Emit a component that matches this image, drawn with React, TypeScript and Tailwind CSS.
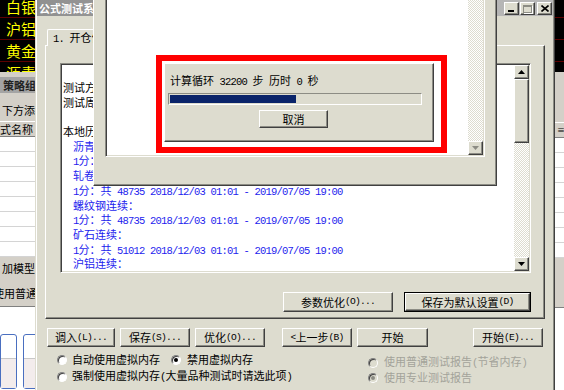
import React from 'react';

const CJK = /([\u2E80-\u9FFF\u3000-\u303F\uFF00-\uFFEF]+)/;

// CJK runs use the page font, everything else a half-width mono run
function Txt({ s, mono = 'text-[9px]' }: { s: string; mono?: string }) {
  const parts = s.split(CJK).filter((p) => p !== '');
  return (
    <>
      {parts.map((p, i) =>
        CJK.test(p) ? (
          <span key={i}>{p}</span>
        ) : (
          <span key={i} className={`font-['Liberation_Mono',monospace] whitespace-pre ${mono}`}>
            {p}
          </span>
        )
      )}
    </>
  );
}

const raised =
  'border border-t-white border-l-white border-r-[#404040] border-b-[#404040] shadow-[inset_-1px_-1px_0_#8c8c84]';
const sunken =
  'border border-t-[#8c8c84] border-l-[#8c8c84] border-r-white border-b-white shadow-[inset_1px_1px_0_#404040,inset_-1px_-1px_0_#dddccf]';
const dither = 'bg-[repeating-conic-gradient(#ffffff_0%_25%,#dddccf_0%_50%)] bg-[length:2px_2px]';

const MONO_LIST = 'text-[10.5px] tracking-[-0.8px]';
const MONO_BTN = 'text-[9.6px] tracking-[-0.75px]';

interface BtnProps {
  label: string;
  className?: string;
  def?: boolean;
}

const Btn: React.FC<BtnProps> = ({ label, className = '', def = false }) => {
  const face = (
    <div className={`flex h-full w-full items-center justify-center bg-[#dddccf] text-[11px] leading-none ${raised}`}>
      <Txt s={label} mono={MONO_BTN} />
    </div>
  );
  if (def) return <div className={`border border-black ${className}`}>{face}</div>;
  return <div className={className}>{face}</div>;
};

const Radio: React.FC<{ on?: boolean; dis?: boolean }> = ({ on = false, dis = false }) => (
  <span
    className={`inline-flex h-[10px] w-[10px] shrink-0 items-center justify-center rounded-full border border-t-[#808080] border-l-[#808080] border-r-white border-b-white shadow-[inset_1px_1px_0_#404040] ${
      dis ? 'bg-[#dddccf]' : 'bg-white'
    }`}
  >
    {on && <span className={`h-[4px] w-[4px] rounded-full ${dis ? 'bg-[#8c8c84]' : 'bg-black'}`} />}
  </span>
);

const Arrow: React.FC<{ up?: boolean; color?: string }> = ({ up = false, color = '#000' }) => (
  <svg width="7" height="4" viewBox="0 0 7 4">
    <polygon points={up ? '3.5,0 7,4 0,4' : '0,0 7,0 3.5,4'} fill={color} />
  </svg>
);

const RANGE = ' 2018/12/03 01:01 - 2019/07/05 19:00';

const LINES: [string, boolean][] = [
  ['测试方式：逐K线计算', false],
  ['测试周期：1分钟', false],
  ['', false],
  ['本地历史数据：', false],
  ['沥青连续：', true],
  ['1分：共 48735' + RANGE, true],
  ['轧卷连续：', true],
  ['1分：共 48735' + RANGE, true],
  ['螺纹钢连续：', true],
  ['1分：共 48735' + RANGE, true],
  ['矿石连续：', true],
  ['1分：共 51012' + RANGE, true],
  ['沪铝连续：', true],
  ['1分：共 51012' + RANGE, true],
];

const QUOTES = ['白银', '沪铝', '黄金', '沥青'];

function LeftPanel() {
  return (
    <div className="absolute left-0 top-0 flex h-[390px] w-[35px] flex-col overflow-hidden text-[11px]">
      <div className="h-[72px] overflow-hidden bg-black">
        <div className="-mt-[4px]">
          {QUOTES.map((q) => (
            <div key={q} className="h-[22px] whitespace-nowrap border-b border-b-[#5c0000] pl-[6px] text-[15px] leading-[21px] text-[#ffff00]">
              {q}
            </div>
          ))}
        </div>
      </div>
      <div className="h-[5px] bg-[#d4d0c8]" />
      <div className="h-[16px] whitespace-nowrap bg-[#a4a4a4] pl-[3px] font-bold leading-[16px] text-[#222]">策略组</div>
      <div className="h-[28px] whitespace-nowrap bg-[#d4d0c8] pl-[2px] pt-[9px] leading-[16px]">下方添加</div>
      <div className="h-[16px] whitespace-nowrap border-t border-b border-t-white border-b-[#808080] bg-[#d4d0c8] leading-[14px]">式名称</div>
      <div className="flex flex-col bg-white">
        {Array.from({ length: 8 }).map((_, i) => (
          <div key={i} className="h-[15px] border-b border-b-[#d4d4d4]" />
        ))}
      </div>
      <div className="h-[23px] whitespace-nowrap bg-[#d4d0c8] pl-[2px] pt-[3px] leading-[16px]">加模型</div>
      <div className="h-[27px] whitespace-nowrap border-b border-b-[#808080] bg-[#d4d0c8] -ml-[7px] pt-[5px] leading-[16px]">使用普通</div>
      <div className="flex flex-1 gap-[6px] bg-white pt-[27px]">
        <div className="flex h-[55px] w-[17px] shrink-0 flex-col rounded-[3px] border border-[#4a6fc0]">
          <div className="h-[24px] border-b border-b-[#c8c8c8]" />
          <div className="flex-1 bg-[#f3ecec]" />
        </div>
        <div className="flex h-[55px] w-[20px] shrink-0 flex-col rounded-[3px] border border-[#4a6fc0]">
          <div className="h-[24px] border-b border-b-[#c8c8c8]" />
          <div className="flex-1 bg-[#f3ecec]" />
        </div>
      </div>
    </div>
  );
}

function RightStrip() {
  return (
    <div className="absolute left-[555px] top-0 flex h-[390px] w-[9px] flex-col overflow-hidden text-[8px]">
      <div className="h-[72px] overflow-hidden bg-black">
        <div className="-mt-[4px]">
          {QUOTES.map((q) => (
            <div key={q} className="h-[22px] border-b border-b-[#5c0000]" />
          ))}
        </div>
      </div>
      <div className="h-[50px] bg-[#d4d0c8]" />
      <div className="h-[16px] border-t border-b border-t-white border-b-[#808080] bg-[#d4d0c8] pl-[2px] leading-[14px]">≡</div>
      <div className="flex flex-col bg-white">
        {Array.from({ length: 8 }).map((_, i) => (
          <div key={i} className="h-[15px] border-b border-b-[#d4d4d4]" />
        ))}
      </div>
      <div className="h-[50px] border-b border-b-[#808080] bg-[#d4d0c8]" />
      <div className="flex-1 bg-white" />
    </div>
  );
}

function MainDialog() {
  return (
    <div className="absolute isolate left-[35px] top-0 flex h-[400px] w-[520px] flex-col border-l border-r border-l-[#dddccf] border-r-[#404040] bg-[#dddccf] text-[11px] shadow-[inset_1px_0_0_#ffffff,inset_-1px_0_0_#8c8c84]">
      <div className="mx-[1px] flex h-[16px] items-start bg-linear-to-r from-[#909090] to-[#bababa]">
        <span className="whitespace-nowrap pl-[2px] font-bold leading-[16px] text-white">公式测试系统</span>
        <div className="ml-auto flex gap-[1px] pt-[2px] pr-[1px]">
          <div className={`flex h-[13px] w-[15px] items-end bg-[#dddccf] pb-[2px] pl-[3px] ${raised}`}>
            <span className="h-[2px] w-[6px] bg-black" />
          </div>
          <div className={`flex h-[13px] w-[15px] items-center justify-center bg-[#dddccf] ${raised}`}>
            <span className="h-[8px] w-[9px] border border-t-2 border-[#8c8c84] shadow-[1px_1px_0_#ffffff]" />
          </div>
          <div className={`ml-[1px] flex h-[13px] w-[15px] items-center justify-center bg-[#dddccf] ${raised}`}>
            <svg width="8" height="7" viewBox="0 0 8 7">
              <path d="M0.5 0.5L7.5 6.5M7.5 0.5L0.5 6.5" stroke="#000" strokeWidth="1.6" />
            </svg>
          </div>
        </div>
      </div>

      <div className="relative z-10 ml-[11px] mt-[13px] h-[17px] w-[110px] rounded-t-[2px] border-l border-t border-r border-l-white border-t-white border-r-[#404040] bg-[#dddccf] pl-[5px] leading-[15px] whitespace-nowrap">
        <Txt s="1. 开仓信号设置" mono={MONO_LIST} />
      </div>

      <div className={`-mt-[1px] ml-[9px] flex h-[274px] w-[500px] flex-col ${raised}`}>
        <div className={`ml-[14px] mt-[17px] flex h-[210px] w-[471px] bg-white ${sunken}`}>
          <div className="flex-1 overflow-hidden pt-[16px]">
            {LINES.map(([s, blue], i) => (
              <div
                key={i}
                className={`h-[14.7px] whitespace-nowrap leading-[14.7px] ${blue ? 'pl-[12px] text-[#1d1dee]' : 'pl-[2px] text-black'}`}
              >
                <Txt s={s} mono={MONO_LIST} />
              </div>
            ))}
          </div>
          <div className="my-[1px] mr-[1px] flex w-[15px] flex-col">
            <div className={`flex h-[14px] items-center justify-center bg-[#dddccf] ${raised}`}>
              <Arrow up />
            </div>
            <div className={`h-[64px] bg-[#dddccf] ${raised}`} />
            <div className={`flex-1 ${dither}`} />
            <div className={`flex h-[14px] items-center justify-center bg-[#dddccf] ${raised}`}>
              <Arrow />
            </div>
          </div>
        </div>
        <div className="mt-[19px] flex justify-end gap-[11px] pr-[13px]">
          <Btn label="参数优化(O)..." className="h-[20px] w-[110px]" />
          <Btn label="保存为默认设置(D)" className="h-[20px] w-[127px]" def />
        </div>
      </div>

      <div className="ml-[11px] mt-[9px] flex h-[19px]">
        <Btn label="调入(L)..." className="h-[19px] w-[68px]" />
        <Btn label="保存(S)..." className="ml-[5px] h-[19px] w-[70px]" />
        <Btn label="优化(O)..." className="ml-[5px] h-[19px] w-[70px]" />
        <Btn label="<上一步(B)" className="ml-[17px] h-[19px] w-[70px]" />
        <Btn label="开始" className="ml-[5px] h-[19px] w-[71px]" />
        <Btn label="开始(E)..." className="ml-[45px] h-[19px] w-[70px]" />
      </div>

      <div className="mt-[4px] flex">
        <div className="ml-[21px] flex w-[290px] flex-col">
          <div className="flex h-[17px] items-center whitespace-nowrap">
            <Radio />
            <span className="ml-[5px]">自动使用虚拟内存</span>
            <span className="ml-[11px] flex items-center">
              <Radio on />
            </span>
            <span className="ml-[6px]">禁用虚拟内存</span>
          </div>
          <div className="flex h-[17px] items-center whitespace-nowrap">
            <Radio />
            <span className="ml-[5px]">
              <Txt s="强制使用虚拟内存(大量品种测试时请选此项)" mono={MONO_LIST} />
            </span>
          </div>
        </div>
        <div className="ml-[21px] mt-[4px] flex flex-col text-[#a3a39a]">
          <div className="flex h-[15px] items-center whitespace-nowrap">
            <Radio dis />
            <span className="ml-[6px]">
              <Txt s="使用普通测试报告(节省内存)" mono={MONO_LIST} />
            </span>
          </div>
          <div className="flex h-[15px] items-center whitespace-nowrap">
            <Radio on dis />
            <span className="ml-[6px]">使用专业测试报告</span>
          </div>
        </div>
      </div>
    </div>
  );
}

function OverWindow() {
  return (
    <div className="absolute left-[93px] top-[-20px] h-[206px] w-[404px] border-l border-r border-b border-l-white border-r-[#404040] border-b-[#404040] bg-[#dddccf] pt-[10px] shadow-[inset_-1px_-1px_0_#8c8c84]">
      <div className={`mx-[11px] flex h-[167px] bg-white ${sunken}`}>
        <div className="flex-1" />
        <div className="my-[1px] mr-[1px] flex w-[15px] flex-col">
          <div className={`flex-1 ${dither}`} />
          <div className={`flex h-[14px] items-center justify-center bg-[#dddccf] ${raised}`}>
            <Arrow color="#8c8c84" />
          </div>
        </div>
      </div>
    </div>
  );
}

function ProgressPanel() {
  return (
    <div className={`absolute left-[164px] top-[63px] flex h-[79px] w-[270px] flex-col bg-[#dddccf] text-[11px] ${raised}`}>
      <div className="mt-[8px] h-[16px] whitespace-nowrap pl-[5px] leading-[16px]">
        <Txt s="计算循环 32200 步 历时 0 秒" mono={MONO_LIST} />
      </div>
      <div className="ml-[3px] mt-[5px] h-[12px] w-[254px] border border-t-[#8c8c84] border-l-[#8c8c84] border-r-white border-b-white p-[1px]">
        <div className="h-full w-[126px] bg-[#0a246a]" />
      </div>
      <Btn label="取消" className="ml-[94px] mt-[5px] h-[18px] w-[69px]" />
    </div>
  );
}

export default function App() {
  return (
    <div className="relative h-[390px] w-[564px] overflow-hidden bg-white font-['Noto_Sans_CJK_SC',sans-serif] text-black">
      <LeftPanel />
      <RightStrip />
      <MainDialog />
      <OverWindow />
      <ProgressPanel />
      <div className="absolute left-[156px] top-[55px] h-[98px] w-[291px] border-[6px] border-[#ff0000]" />
    </div>
  );
}
